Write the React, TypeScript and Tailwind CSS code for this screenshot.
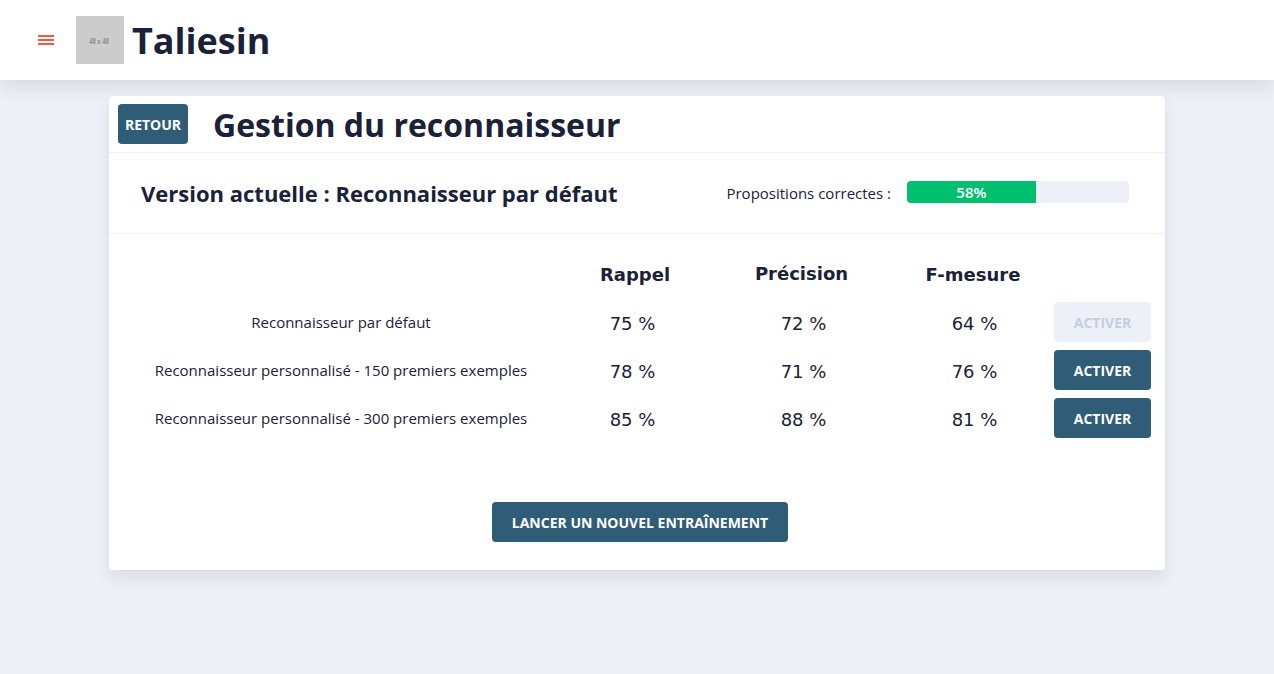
import React from "react";
import clsx from "clsx";

type Model = {
  name: string;
  recall: number;
  precision: number;
  fMeasure: number;
  active: boolean;
};

const models: Model[] = [
  { name: "Reconnaisseur par défaut", recall: 75, precision: 72, fMeasure: 64, active: true },
  { name: "Reconnaisseur personnalisé - 150 premiers exemples", recall: 78, precision: 71, fMeasure: 76, active: false },
  { name: "Reconnaisseur personnalisé - 300 premiers exemples", recall: 85, precision: 88, fMeasure: 81, active: false },
];

function Button({
  children,
  className,
  disabled,
}: {
  children: React.ReactNode;
  className: string;
  disabled?: boolean;
}) {
  return (
    <button
      disabled={disabled}
      className={clsx(
        "flex h-10 items-center justify-center rounded pt-0.5 text-[14px] leading-4 font-bold whitespace-nowrap uppercase",
        disabled ? "bg-[#edf0f7] text-[#c5cee0]" : "bg-[#2f5d77] text-white",
        className,
      )}
    >
      {children}
    </button>
  );
}

function Header() {
  return (
    <header className="flex h-20 items-center bg-white pl-[38px] shadow-[0_8px_16px_0_rgba(44,51,73,0.1)]">
      <button aria-label="Menu" className="flex w-4 flex-col gap-0.5">
        <span className="h-0.5 bg-[#f4583f]" />
        <span className="h-0.5 bg-[#f4583f]" />
        <span className="h-0.5 bg-[#f4583f]" />
      </button>
      <div className="ml-[22px] flex size-12 items-center justify-center bg-[#cccccc] pt-[3px] pr-0.5 text-[#8a8a8a]">
        <span className="origin-center scale-x-[0.82] font-['Liberation_Serif',serif] text-[8px] leading-none font-bold whitespace-nowrap">
          48 x 48
        </span>
      </div>
      <h1 className="ml-2 pt-0.5 text-[36px] leading-12 font-bold">Taliesin</h1>
    </header>
  );
}

function Progress({ value }: { value: number }) {
  return (
    <div className="h-[22px] w-[222px] overflow-hidden rounded bg-[#edf0f7]">
      <div
        className="flex h-full items-center justify-center bg-[#00c070] text-[15px] leading-[22px] font-semibold text-white"
        style={{ width: `${value}%` }}
      >
        {value}%
      </div>
    </div>
  );
}

function Table() {
  const columns = "grid grid-cols-[412px_171px_171px_165px_97px] items-center";
  return (
    <div className="pl-[26px] font-['DejaVu_Sans',sans-serif] text-[18px] leading-6">
      <div className={clsx(columns, "h-16 pt-[18px] text-center font-bold")}>
        <span />
        <span className="pl-[5px]">Rappel</span>
        <span className="pr-1 pb-0.5">Précision</span>
        <span className="pl-[3px]">F-mesure</span>
      </div>
      {models.map((model) => (
        <div key={model.name} className={clsx(columns, "h-12 text-center")}>
          <span className="font-['Open_Sans',sans-serif] text-[15px] leading-5">{model.name}</span>
          <span className="pt-1">{model.recall} %</span>
          <span className="pt-1">{model.precision} %</span>
          <span className="pt-1 pl-1.5">{model.fMeasure} %</span>
          <Button disabled={model.active} className="w-[97px] font-['Open_Sans',sans-serif]">
            Activer
          </Button>
        </div>
      ))}
    </div>
  );
}

export default function App() {
  return (
    <div className="min-h-screen bg-[#edf0f7] font-['Open_Sans',sans-serif] text-[15px] text-[#1a2138]">
      <Header />
      <main className="mx-auto mt-4 h-[474px] w-[1056px] rounded bg-white shadow-[0_8px_16px_0_rgba(44,51,73,0.1)]">
        <div className="flex h-[57px] items-center border-b border-[#edf0f7] pl-[9px]">
          <Button className="w-[70px]">Retour</Button>
          <h2 className="ml-[25px] pt-0.5 text-[32px] leading-10 font-bold">Gestion du reconnaisseur</h2>
        </div>
        <section className="flex h-[81px] items-center justify-between border-b border-[#edf0f7] pr-9 pl-8">
          <h4 className="text-[22px] leading-8 font-bold">Version actuelle : Reconnaisseur par défaut</h4>
          <div className="flex items-start gap-4 pb-0.5">
            <span className="pt-0.5 leading-5">Propositions correctes :</span>
            <Progress value={58} />
          </div>
        </section>
        <Table />
        <div className="flex justify-center pt-[60px] pl-1.5">
          <Button className="w-[296px]">Lancer un nouvel entraînement</Button>
        </div>
      </main>
    </div>
  );
}
